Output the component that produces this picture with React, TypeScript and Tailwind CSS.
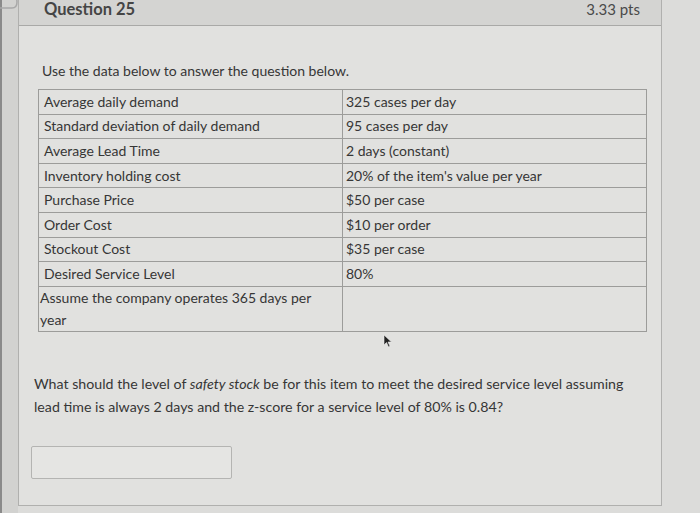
import React from "react";

const rows: [string, string][] = [
  ["Average daily demand", "325 cases per day"],
  ["Standard deviation of daily demand", "95 cases per day"],
  ["Average Lead Time", "2 days (constant)"],
  ["Inventory holding cost", "20% of the item's value per year"],
  ["Purchase Price", "$50 per case"],
  ["Order Cost", "$10 per order"],
  ["Stockout Cost", "$35 per case"],
  ["Desired Service Level", "80%"],
];

export default function App() {
  return (
    <div
      className="relative w-[700px] h-[513px] overflow-hidden bg-[#dcdcda] flex text-[#363636]"
      style={{ fontFamily: "Lato, 'Open Sans', sans-serif" }}
    >
      {/* left strip */}
      <div className="w-[18px] shrink-0 bg-[#d2d2d0] border-l-2 border-[#8a8a8a] relative">
        <svg className="absolute left-[-2px] top-[-6px]" width="20" height="18" viewBox="0 0 20 18">
          <path d="M0 2 H12 Q17 2 17 8 Q17 14 12 14 H0" fill="none" stroke="#a8a8a8" strokeWidth="1.5" />
        </svg>
      </div>

      {/* card */}
      <div className="w-[644px] shrink-0 h-[506px] border-l border-r border-b border-[#b0b0ae] bg-[#e1e1df] flex flex-col">
        <div className="h-[26px] bg-[#d4d4d2] border-b border-[#a9a9a7] flex items-start justify-between pl-[25px] pr-[21px]">
          <span className="text-[16.5px] font-bold leading-[18px] text-[#454545]">Question 25</span>
          <span className="text-[15px] leading-[18px] text-[#4a4a4a]">3.33 pts</span>
        </div>

        <div className="flex flex-col pt-[35px]">
          <p className="pl-[23px] text-[14px] leading-[20px]">Use the data below to answer the question below.</p>

          <table className="ml-[19px] mt-[8px] w-[609px] border-collapse text-[14px]">
            <tbody>
              {rows.map(([a, b]) => (
                <tr key={a} className="h-[24.6px]">
                  <td className="w-[304px] border border-[#9c9c9a] px-[5px] leading-[20px] align-middle">{a}</td>
                  <td className="border border-[#9c9c9a] px-[3px] leading-[20px] align-middle">{b}</td>
                </tr>
              ))}
              <tr className="h-[45px]">
                <td className="w-[304px] border border-[#9c9c9a] px-[1px] leading-[22px] align-middle">
                  Assume the company operates 365 days per
                  <br />
                  year
                </td>
                <td className="border border-[#9c9c9a]"></td>
              </tr>
            </tbody>
          </table>

          <p className="pl-[15px] mt-[40px] w-[625px] text-[14.2px] leading-[23px]">
            What should the level of <i>safety stock</i> be for this item to meet the desired service level assuming
            <br />
            lead time is always 2 days and the z-score for a service level of 80% is 0.84?
          </p>

          <div className="ml-[12px] mt-[28px] w-[201px] h-[33px] border border-[#b4b4b2] bg-[#e5e5e3] rounded-[2px]" />
        </div>
      </div>

      {/* cursor */}
      <svg className="absolute left-[383px] top-[334px]" width="10" height="14" viewBox="0 0 10 14">
        <path d="M1 1 L1 11 L3.5 8.5 L5.5 13 L7 12.3 L5 8 L8.5 8 Z" fill="#222" stroke="#eee" strokeWidth="0.6" />
      </svg>
    </div>
  );
}
